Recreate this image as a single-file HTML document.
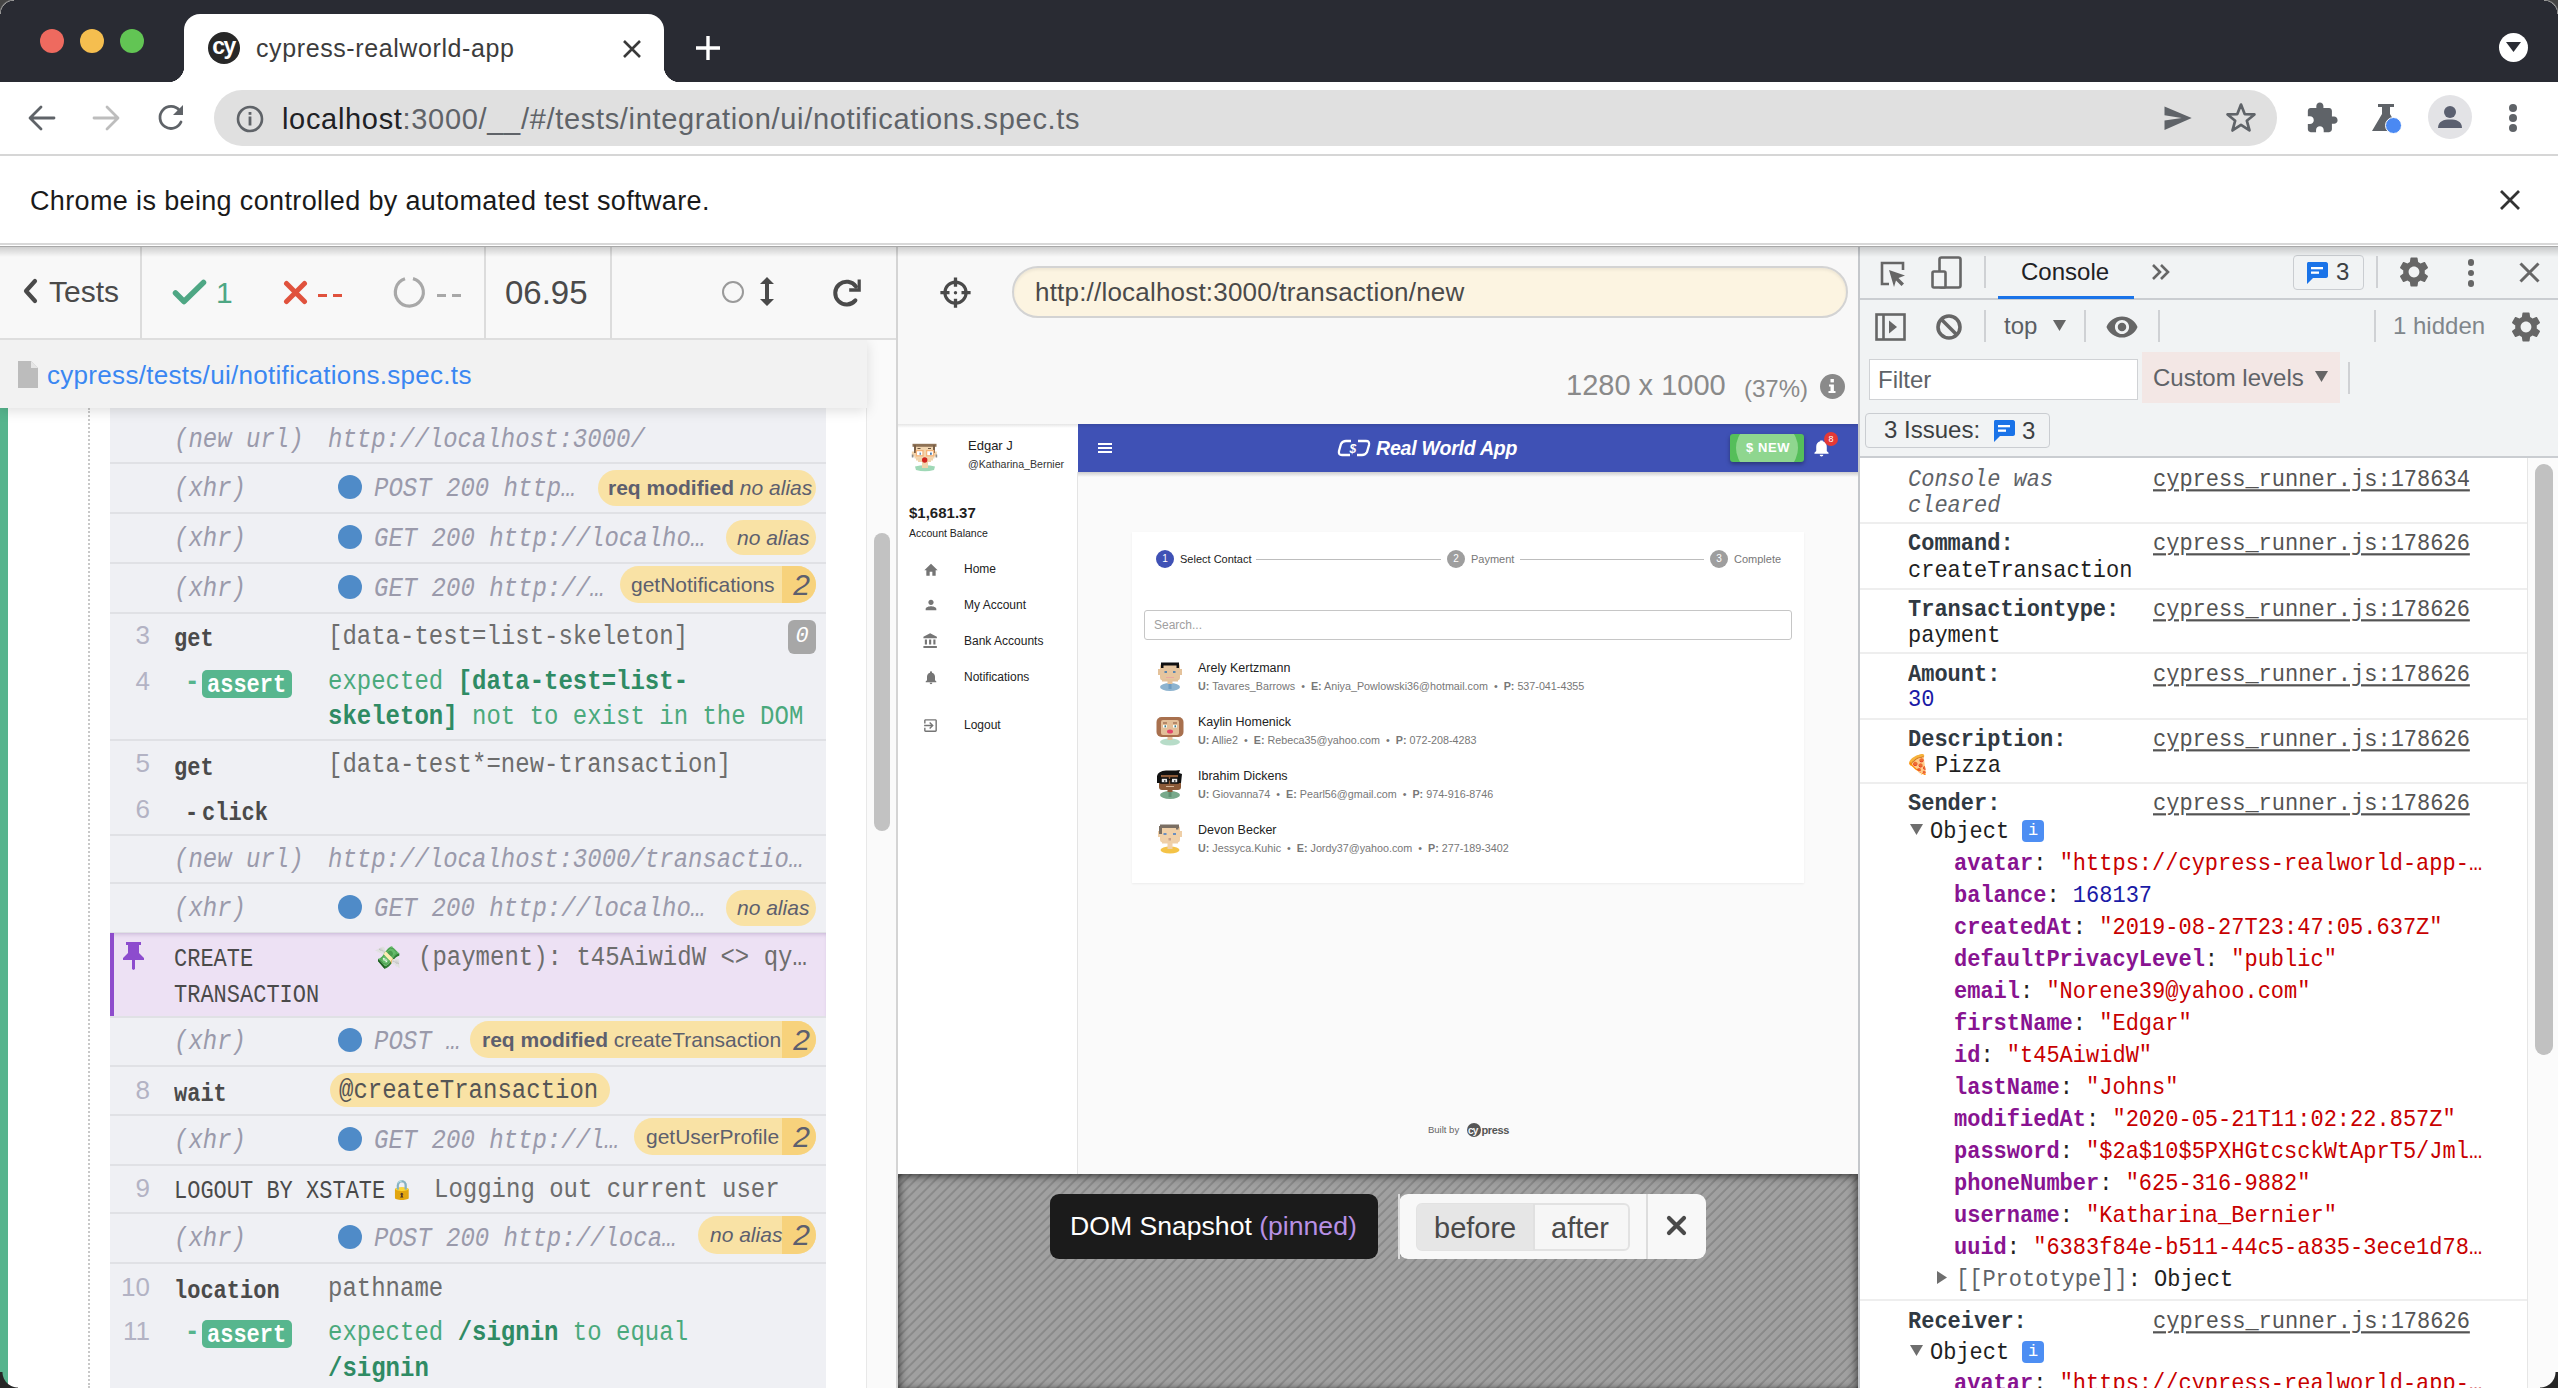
<!DOCTYPE html>
<html><head><meta charset="utf-8">
<style>
*{box-sizing:border-box;margin:0;padding:0}
html,body{width:2558px;height:1388px;overflow:hidden;background:#fff;font-family:"Liberation Sans",sans-serif;position:relative}
.a{position:absolute}
.nw{white-space:nowrap}
#tabstrip{left:0;top:0;width:2558px;height:82px;background:#292b33}
.tl{width:24px;height:24px;border-radius:50%;top:29px}
#tab{left:184px;top:14px;width:480px;height:68px;background:#fff;border-radius:16px 16px 0 0}
#toolbar{left:0;top:82px;width:2558px;height:73px;background:#fff}
#omni{left:214px;top:90px;width:2063px;height:56px;background:#e0e0e0;border-radius:28px}
#infobar{left:0;top:154px;width:2558px;height:92px;background:#fff;border-top:2px solid #d6d6d6;border-bottom:1px solid #fff;box-shadow:inset 0 -2px 0 #d8d8d8}
.badge{position:absolute;border-radius:20px;background:#f9e2a5;overflow:hidden;white-space:nowrap}
</style></head><body>
<!-- TAB STRIP -->
<div id="tabstrip" class="a"></div>
<div class="a tl" style="left:40px;background:#ee6a5f"></div>
<div class="a tl" style="left:80px;background:#f5be4f"></div>
<div class="a tl" style="left:120px;background:#62c554"></div>
<div id="tab" class="a"></div>
<div class="a" style="left:168px;top:66px;width:16px;height:16px;background:radial-gradient(circle at 0 0,#292b33 16px,#fff 16.5px)"></div>
<div class="a" style="left:664px;top:66px;width:16px;height:16px;background:radial-gradient(circle at 100% 0,#292b33 16px,#fff 16.5px)"></div>
<div class="a" style="left:208px;top:32px;width:32px;height:32px;border-radius:50%;background:#282828;color:#fff;font-weight:bold;font-size:23px;line-height:29px;text-align:center;letter-spacing:-1.5px;text-indent:-1px">cy</div>
<div class="a nw" style="left:256px;top:32px;font-size:25px;color:#3c3c3c;line-height:32px;letter-spacing:0.6px">cypress-realworld-app</div>
<svg class="a" style="left:621px;top:38px" width="22" height="22" viewBox="0 0 22 22"><path d="M3 3L19 19M19 3L3 19" stroke="#3a3a3a" stroke-width="2.6"/></svg>
<svg class="a" style="left:694px;top:34px" width="28" height="28" viewBox="0 0 28 28"><path d="M14 2V26M2 14H26" stroke="#fff" stroke-width="3.4"/></svg>
<div class="a" style="left:2499px;top:33px;width:29px;height:29px;border-radius:50%;background:#fff"></div>
<svg class="a" style="left:2505px;top:40px" width="17" height="14" viewBox="0 0 17 14"><path d="M1 2H16L8.5 12Z" fill="#292b33"/></svg>
<!-- TOOLBAR -->
<div id="toolbar" class="a"></div>
<svg class="a" style="left:26px;top:102px" width="32" height="32" viewBox="0 0 32 32"><path d="M28 16H5M15 5L4 16L15 27" stroke="#5f6368" stroke-width="2.8" fill="none" stroke-linecap="round" stroke-linejoin="round"/></svg>
<svg class="a" style="left:90px;top:102px" width="32" height="32" viewBox="0 0 32 32"><path d="M4 16H27M17 5L28 16L17 27" stroke="#bdbdbd" stroke-width="2.8" fill="none" stroke-linecap="round" stroke-linejoin="round"/></svg>
<svg class="a" style="left:155px;top:102px" width="32" height="32" viewBox="0 0 32 32"><path d="M26 20A11 11 0 1 1 24.5 8.5" stroke="#5f6368" stroke-width="2.8" fill="none" stroke-linecap="round"/><path d="M28 3V13H18Z" fill="#5f6368"/></svg>
<div id="omni" class="a"></div>
<svg class="a" style="left:235px;top:104px" width="30" height="30" viewBox="0 0 30 30"><circle cx="15" cy="15" r="12" stroke="#5f6368" stroke-width="2.6" fill="none"/><rect x="13.6" y="12.5" width="2.8" height="9" fill="#5f6368"/><rect x="13.6" y="8" width="2.8" height="2.8" fill="#5f6368"/></svg>
<div class="a nw" style="left:282px;top:101px;font-size:29px;line-height:36px;color:#5f6368;letter-spacing:0.68px"><span style="color:#202124">localhost</span>:3000/__/#/tests/integration/ui/notifications.spec.ts</div>
<svg class="a" style="left:2162px;top:103px" width="34" height="30" viewBox="0 0 34 30"><path d="M2.5 3.4L29.7 15L2.5 26.9V17.6L19.7 15L2.5 12.3Z" fill="#5f6368"/></svg>
<svg class="a" style="left:2224px;top:101px" width="34" height="34" viewBox="0 0 24 24"><path d="M12 2.5L14.6 9.2L21.5 9.5L16.1 13.9L18 20.8L12 16.8L6 20.8L7.9 13.9L2.5 9.5L9.4 9.2Z" fill="none" stroke="#5f6368" stroke-width="1.9" stroke-linejoin="round"/></svg>
<svg class="a" style="left:2304px;top:101px" width="36" height="34" viewBox="0 0 24 24"><path d="M20.5 11H19V7c0-1.1-.9-2-2-2h-4V3.5C13 2.12 11.88 1 10.5 1S8 2.12 8 3.5V5H4c-1.1 0-1.99.9-1.99 2v3.8H3.5c1.49 0 2.7 1.21 2.7 2.7s-1.21 2.7-2.7 2.7H2V20c0 1.1.9 2 2 2h3.8v-1.5c0-1.49 1.21-2.7 2.7-2.7 1.49 0 2.7 1.21 2.7 2.7V22H17c1.1 0 2-.9 2-2v-4h1.5c1.38 0 2.5-1.12 2.5-2.5S21.88 11 20.5 11z" fill="#5f6368"/></svg>
<svg class="a" style="left:2368px;top:102px" width="36" height="32" viewBox="0 0 36 32"><path d="M10 2H26V5H22V12L32 29H4L14 12V5H10Z" fill="#5f6368"/></svg>
<div class="a" style="left:2385.3px;top:117.4px;width:17px;height:17px;border-radius:50%;background:#4a89f3;border:1.7px solid #fff"></div>
<div class="a" style="left:2428px;top:95px;width:44px;height:44px;border-radius:50%;background:#e3e3e6"></div>
<svg class="a" style="left:2436px;top:103px" width="28" height="28" viewBox="0 0 28 28"><circle cx="14" cy="9" r="6" fill="#5b6070"/><path d="M2 25C2 18 8 16.5 14 16.5S26 18 26 25Z" fill="#5b6070"/></svg>
<div class="a" style="left:2509px;top:104px;width:8px;height:8px;border-radius:50%;background:#5f6368"></div>
<div class="a" style="left:2509px;top:114px;width:8px;height:8px;border-radius:50%;background:#5f6368"></div>
<div class="a" style="left:2509px;top:124px;width:8px;height:8px;border-radius:50%;background:#5f6368"></div>
<!-- INFOBAR -->
<div id="infobar" class="a"></div>
<div class="a nw" style="left:30px;top:185px;font-size:27px;line-height:32px;color:#1a1a1a;letter-spacing:0.36px">Chrome is being controlled by automated test software.</div>
<svg class="a" style="left:2499px;top:189px" width="22" height="22" viewBox="0 0 22 22"><path d="M2 2L20 20M20 2L2 20" stroke="#333" stroke-width="2.8"/></svg>
<div class="a" style="left:0px;top:246px;width:897px;height:1142px;background:#fff;"></div>
<div class="a" style="left:0px;top:246px;width:897px;height:93px;background:#f8f8f8;"></div>
<div class="a" style="left:0px;top:338px;width:897px;height:2px;background:#dedede;"></div>
<div class="a" style="left:140px;top:246px;width:2px;height:93px;background:#dcdcdc;"></div>
<div class="a" style="left:484px;top:246px;width:2px;height:93px;background:#dcdcdc;"></div>
<div class="a" style="left:610px;top:246px;width:2px;height:93px;background:#dcdcdc;"></div>
<svg class="a" style="left:22px;top:278px" width="18" height="26" viewBox="0 0 18 26"><path d="M13 3L4 13L13 23" stroke="#4a4a4a" stroke-width="4.2" fill="none" stroke-linecap="round" stroke-linejoin="round"/></svg>
<div class="a nw" style="left:49px;top:276.5px;font-size:30px;line-height:30px;color:#4a4a4a;">Tests</div>
<svg class="a" style="left:172px;top:279px" width="35" height="26" viewBox="0 0 35 26"><path d="M3.5 14L12 22.5L31.5 3.5" stroke="#4ea784" stroke-width="5.5" fill="none" stroke-linecap="round" stroke-linejoin="round"/></svg>
<div class="a nw" style="left:216px;top:277.5px;font-size:30px;line-height:30px;color:#4ea784;">1</div>
<svg class="a" style="left:283px;top:280px" width="25" height="25" viewBox="0 0 25 25"><path d="M3.5 3.5L21.5 21.5M21.5 3.5L3.5 21.5" stroke="#e0523d" stroke-width="5" stroke-linecap="round"/></svg>
<div class="a" style="left:318px;top:294px;width:9px;height:3px;background:#e0523d;"></div>
<div class="a" style="left:333px;top:294px;width:9px;height:3px;background:#e0523d;"></div>
<svg class="a" style="left:392px;top:275px" width="35" height="35" viewBox="0 0 35 35"><path d="M21 3.6A14 14 0 1 1 13 3.8" stroke="#a8a8a8" stroke-width="3.2" fill="none"/></svg>
<div class="a" style="left:437px;top:294px;width:9px;height:3px;background:#a8a8a8;"></div>
<div class="a" style="left:452px;top:294px;width:9px;height:3px;background:#a8a8a8;"></div>
<div class="a nw" style="left:505px;top:275.9px;font-size:33px;line-height:33px;color:#4a4a4a;">06.95</div>
<div class="a" style="left:722px;top:281px;width:22px;height:22px;border-radius:50%;border:2px solid #9a9a9a"></div>
<svg class="a" style="left:758px;top:276px" width="18" height="31" viewBox="0 0 18 31"><path d="M9 1L16 8H11V23H16L9 30L2 23H7V8H2Z" fill="#4a4a4a"/></svg>
<svg class="a" style="left:830px;top:277px" width="34" height="32" viewBox="0 0 34 32"><path d="M26 9.6A11.4 11.4 0 1 0 25.4 23.4" stroke="#4a4a4a" stroke-width="4" fill="none" stroke-linecap="round"/><path d="M19.2 11.2H27.6V2.4H30.8V14.7H19.2Z" fill="#4a4a4a"/></svg>
<div class="a" style="left:0px;top:340px;width:867px;height:68px;background:#f2f2f2;"></div>
<svg class="a" style="left:18px;top:361px" width="20" height="27" viewBox="0 0 20 27"><path d="M0 0H13L20 7V27H0Z" fill="#bcbcbc"/><path d="M13 0V7H20" fill="#e6e6e6"/></svg>
<div class="a nw" style="left:47px;top:361.9px;font-size:26px;line-height:26px;color:#3a87f2;letter-spacing:0.3px;">cypress/tests/ui/notifications.spec.ts</div>
<div class="a" style="left:867px;top:340px;width:29px;height:1048px;background:#fafafa;"></div>
<div class="a" style="left:866px;top:408px;width:1px;height:980px;background:#e8e8e8;"></div>
<div class="a" style="left:874px;top:533px;width:16px;height:298px;background:#c2c2c2;border-radius:8px;"></div>
<div class="a" style="left:0px;top:408px;width:8px;height:980px;background:#56b48d;"></div>
<div class="a" style="left:88px;top:408px;width:0;height:980px;border-left:2px dotted #c8c8c8"></div>
<div class="a" style="left:110px;top:408px;width:716px;height:980px;background:#eff0f4;"></div>
<div class="a" style="left:110px;top:462px;width:716px;height:2px;background:#e0e1e5;"></div>
<div class="a" style="left:110px;top:512px;width:716px;height:2px;background:#e0e1e5;"></div>
<div class="a" style="left:110px;top:562px;width:716px;height:2px;background:#e0e1e5;"></div>
<div class="a" style="left:110px;top:612px;width:716px;height:2px;background:#e0e1e5;"></div>
<div class="a" style="left:110px;top:739px;width:716px;height:2px;background:#e0e1e5;"></div>
<div class="a" style="left:110px;top:834px;width:716px;height:2px;background:#e0e1e5;"></div>
<div class="a" style="left:110px;top:882px;width:716px;height:2px;background:#e0e1e5;"></div>
<div class="a" style="left:110px;top:932px;width:716px;height:2px;background:#e0e1e5;"></div>
<div class="a" style="left:110px;top:1016px;width:716px;height:2px;background:#e0e1e5;"></div>
<div class="a" style="left:110px;top:1065px;width:716px;height:2px;background:#e0e1e5;"></div>
<div class="a" style="left:110px;top:1114px;width:716px;height:2px;background:#e0e1e5;"></div>
<div class="a" style="left:110px;top:1164px;width:716px;height:2px;background:#e0e1e5;"></div>
<div class="a" style="left:110px;top:1212px;width:716px;height:2px;background:#e0e1e5;"></div>
<div class="a" style="left:110px;top:1262px;width:716px;height:2px;background:#e0e1e5;"></div>
<div class="a" style="left:110px;top:933px;width:716px;height:83px;background:#ede1f4;box-shadow:inset 0 3px 4px -2px rgba(80,40,120,.25);"></div>
<div class="a" style="left:110px;top:933px;width:4px;height:83px;background:#8e4ccc;"></div>
<div class="a nw" style="left:174px;top:428.8px;font-size:24px;line-height:24px;color:#9a9aab;font-family:'Liberation Mono',monospace;font-style:italic;transform:scaleY(1.14);transform-origin:0 18.2px;">(new url)</div>
<div class="a nw" style="left:328px;top:428.8px;font-size:24px;line-height:24px;color:#9a9aab;font-family:'Liberation Mono',monospace;font-style:italic;transform:scaleY(1.14);transform-origin:0 18.2px;">http://localhost:3000/</div>
<div class="a nw" style="left:174px;top:477.8px;font-size:24px;line-height:24px;color:#9a9aab;font-family:'Liberation Mono',monospace;font-style:italic;transform:scaleY(1.14);transform-origin:0 18.2px;">(xhr)</div>
<div class="a" style="left:338px;top:475px;width:24px;height:24px;border-radius:50%;background:#4f8bc8"></div>
<div class="a nw" style="left:374px;top:477.8px;font-size:24px;line-height:24px;color:#9a9aab;font-family:'Liberation Mono',monospace;font-style:italic;transform:scaleY(1.14);transform-origin:0 18.2px;">POST 200 http…</div>
<div class="badge" style="left:598px;top:470px;width:218px;height:36px;"><div class="a nw" style="left:10px;top:0;height:36px;line-height:36px;font-size:21px;color:#5d5f6e"><span style="font-weight:bold">req modified </span><span style="font-style:italic">no alias</span></div></div>
<div class="a nw" style="left:174px;top:527.8px;font-size:24px;line-height:24px;color:#9a9aab;font-family:'Liberation Mono',monospace;font-style:italic;transform:scaleY(1.14);transform-origin:0 18.2px;">(xhr)</div>
<div class="a" style="left:338px;top:525px;width:24px;height:24px;border-radius:50%;background:#4f8bc8"></div>
<div class="a nw" style="left:374px;top:527.8px;font-size:24px;line-height:24px;color:#9a9aab;font-family:'Liberation Mono',monospace;font-style:italic;transform:scaleY(1.14);transform-origin:0 18.2px;">GET 200 http://localho…</div>
<div class="badge" style="left:726px;top:520px;width:90px;height:35px;"><div class="a nw" style="left:11px;top:0;height:35px;line-height:35px;font-size:21px;color:#5d5f6e"><span style="font-style:italic">no alias</span></div></div>
<div class="a nw" style="left:174px;top:577.8px;font-size:24px;line-height:24px;color:#9a9aab;font-family:'Liberation Mono',monospace;font-style:italic;transform:scaleY(1.14);transform-origin:0 18.2px;">(xhr)</div>
<div class="a" style="left:338px;top:575px;width:24px;height:24px;border-radius:50%;background:#4f8bc8"></div>
<div class="a nw" style="left:374px;top:577.8px;font-size:24px;line-height:24px;color:#9a9aab;font-family:'Liberation Mono',monospace;font-style:italic;transform:scaleY(1.14);transform-origin:0 18.2px;">GET 200 http://…</div>
<div class="badge" style="left:620px;top:566px;width:196px;height:37px;"><div class="a" style="right:0;top:0;width:34px;height:37px;background:#f7d27c"></div><div class="a nw" style="right:6px;top:3.5px;font-size:30px;line-height:30px;font-style:italic;color:#5d5f6e">2</div><div class="a nw" style="left:11px;top:0;height:37px;line-height:37px;font-size:21px;color:#5d5f6e"><span style="">getNotifications</span></div></div>
<div class="a nw" style="left:100px;top:621.9px;font-size:26px;line-height:26px;color:#b3b3c4;width:50px;text-align:right;">3</div>
<div class="a nw" style="left:174px;top:630.3px;font-size:22px;line-height:22px;color:#4a4a4a;font-family:'Liberation Mono',monospace;font-weight:bold;transform:scaleY(1.14);transform-origin:0 16.7px;">get</div>
<div class="a nw" style="left:328px;top:625.8px;font-size:24px;line-height:24px;color:#6d6d6d;font-family:'Liberation Mono',monospace;transform:scaleY(1.14);transform-origin:0 18.2px;">[data-test=list-skeleton]</div>
<div class="a" style="left:788px;top:620px;width:28px;height:34px;border-radius:6px;background:#a7a7a7;color:#fff;font-family:'Liberation Mono';font-style:italic;font-size:22px;line-height:34px;text-align:center">0</div>
<div class="a nw" style="left:100px;top:667.9px;font-size:26px;line-height:26px;color:#b3b3c4;width:50px;text-align:right;">4</div>
<div class="a nw" style="left:185px;top:671.8px;font-size:24px;line-height:24px;color:#56b48d;font-family:'Liberation Mono',monospace;font-weight:bold;transform:scaleY(1.14);transform-origin:0 18.2px;">-</div>
<div class="a" style="left:202px;top:670px;width:90px;height:28px;border-radius:5px;background:#57b68e"></div>
<div class="a nw" style="left:207px;top:675.8px;font-size:22px;line-height:22px;color:#fff;font-family:'Liberation Mono',monospace;font-weight:bold;transform:scaleY(1.14);transform-origin:0 16.7px;">assert</div>
<div class="a nw" style="left:328px;top:670.8px;font-size:24px;line-height:24px;color:#4aa97c;font-family:'Liberation Mono',monospace;transform:scaleY(1.14);transform-origin:0 18.2px;">expected <b style="color:#2f8b64">[data-test=list-</b></div>
<div class="a nw" style="left:328px;top:705.8px;font-size:24px;line-height:24px;color:#4aa97c;font-family:'Liberation Mono',monospace;transform:scaleY(1.14);transform-origin:0 18.2px;"><b style="color:#2f8b64">skeleton]</b> not to exist in the DOM</div>
<div class="a nw" style="left:100px;top:749.9px;font-size:26px;line-height:26px;color:#b3b3c4;width:50px;text-align:right;">5</div>
<div class="a nw" style="left:174px;top:758.8px;font-size:22px;line-height:22px;color:#4a4a4a;font-family:'Liberation Mono',monospace;font-weight:bold;transform:scaleY(1.14);transform-origin:0 16.7px;">get</div>
<div class="a nw" style="left:328px;top:753.8px;font-size:24px;line-height:24px;color:#6d6d6d;font-family:'Liberation Mono',monospace;transform:scaleY(1.14);transform-origin:0 18.2px;">[data-test*=new-transaction]</div>
<div class="a nw" style="left:100px;top:795.9px;font-size:26px;line-height:26px;color:#b3b3c4;width:50px;text-align:right;">6</div>
<div class="a nw" style="left:185px;top:804.3px;font-size:22px;line-height:22px;color:#4a4a4a;font-family:'Liberation Mono',monospace;font-weight:bold;transform:scaleY(1.14);transform-origin:0 16.7px;">-</div>
<div class="a nw" style="left:202px;top:804.3px;font-size:22px;line-height:22px;color:#4a4a4a;font-family:'Liberation Mono',monospace;font-weight:bold;transform:scaleY(1.14);transform-origin:0 16.7px;">click</div>
<div class="a nw" style="left:174px;top:848.8px;font-size:24px;line-height:24px;color:#9a9aab;font-family:'Liberation Mono',monospace;font-style:italic;transform:scaleY(1.14);transform-origin:0 18.2px;">(new url)</div>
<div class="a nw" style="left:328px;top:848.8px;font-size:24px;line-height:24px;color:#9a9aab;font-family:'Liberation Mono',monospace;font-style:italic;transform:scaleY(1.14);transform-origin:0 18.2px;">http://localhost:3000/transactio…</div>
<div class="a nw" style="left:174px;top:897.8px;font-size:24px;line-height:24px;color:#9a9aab;font-family:'Liberation Mono',monospace;font-style:italic;transform:scaleY(1.14);transform-origin:0 18.2px;">(xhr)</div>
<div class="a" style="left:338px;top:895px;width:24px;height:24px;border-radius:50%;background:#4f8bc8"></div>
<div class="a nw" style="left:374px;top:897.8px;font-size:24px;line-height:24px;color:#9a9aab;font-family:'Liberation Mono',monospace;font-style:italic;transform:scaleY(1.14);transform-origin:0 18.2px;">GET 200 http://localho…</div>
<div class="badge" style="left:726px;top:890px;width:90px;height:36px;"><div class="a nw" style="left:11px;top:0;height:36px;line-height:36px;font-size:21px;color:#5d5f6e"><span style="font-style:italic">no alias</span></div></div>
<svg class="a" style="left:122px;top:941px" width="23" height="29" viewBox="0 0 23 29"><path d="M4 1H19V4H17L17 12L22 17V19H13V28L11.5 29L10 28V19H1V17L6 12V4H4Z" fill="#8d4cce"/></svg>
<div class="a nw" style="left:174px;top:950.3px;font-size:22px;line-height:22px;color:#4a4a4a;font-family:'Liberation Mono',monospace;transform:scaleY(1.14);transform-origin:0 16.7px;">CREATE</div>
<div class="a nw" style="left:174px;top:986.3px;font-size:22px;line-height:22px;color:#4a4a4a;font-family:'Liberation Mono',monospace;transform:scaleY(1.14);transform-origin:0 16.7px;">TRANSACTION</div>
<div class="a nw" style="left:374px;top:947.3px;font-size:22px;line-height:22px;color:#000;">💸</div>
<div class="a nw" style="left:418px;top:946.8px;font-size:24px;line-height:24px;color:#6d6d6d;font-family:'Liberation Mono',monospace;transform:scaleY(1.14);transform-origin:0 18.2px;">(payment): t45AiwidW &lt;&gt; qy…</div>
<div class="a nw" style="left:174px;top:1030.8px;font-size:24px;line-height:24px;color:#9a9aab;font-family:'Liberation Mono',monospace;font-style:italic;transform:scaleY(1.14);transform-origin:0 18.2px;">(xhr)</div>
<div class="a" style="left:338px;top:1028px;width:24px;height:24px;border-radius:50%;background:#4f8bc8"></div>
<div class="a nw" style="left:374px;top:1030.8px;font-size:24px;line-height:24px;color:#9a9aab;font-family:'Liberation Mono',monospace;font-style:italic;transform:scaleY(1.14);transform-origin:0 18.2px;">POST …</div>
<div class="badge" style="left:470px;top:1021px;width:346px;height:37px;"><div class="a" style="right:0;top:0;width:34px;height:37px;background:#f7d27c"></div><div class="a nw" style="right:6px;top:3.5px;font-size:30px;line-height:30px;font-style:italic;color:#5d5f6e">2</div><div class="a nw" style="left:12px;top:0;height:37px;line-height:37px;font-size:21px;color:#5d5f6e"><span style="font-weight:bold">req modified </span><span style="">createTransaction</span></div></div>
<div class="a nw" style="left:100px;top:1076.9px;font-size:26px;line-height:26px;color:#b3b3c4;width:50px;text-align:right;">8</div>
<div class="a nw" style="left:174px;top:1085.3px;font-size:22px;line-height:22px;color:#4a4a4a;font-family:'Liberation Mono',monospace;font-weight:bold;transform:scaleY(1.14);transform-origin:0 16.7px;">wait</div>
<div class="badge" style="left:330px;top:1073px;width:280px;height:34px"></div>
<div class="a nw" style="left:339px;top:1079.8px;font-size:24px;line-height:24px;color:#555;font-family:'Liberation Mono',monospace;transform:scaleY(1.14);transform-origin:0 18.2px;">@createTransaction</div>
<div class="a nw" style="left:174px;top:1129.8px;font-size:24px;line-height:24px;color:#9a9aab;font-family:'Liberation Mono',monospace;font-style:italic;transform:scaleY(1.14);transform-origin:0 18.2px;">(xhr)</div>
<div class="a" style="left:338px;top:1127px;width:24px;height:24px;border-radius:50%;background:#4f8bc8"></div>
<div class="a nw" style="left:374px;top:1129.8px;font-size:24px;line-height:24px;color:#9a9aab;font-family:'Liberation Mono',monospace;font-style:italic;transform:scaleY(1.14);transform-origin:0 18.2px;">GET 200 http://l…</div>
<div class="badge" style="left:634px;top:1118px;width:182px;height:37px;"><div class="a" style="right:0;top:0;width:34px;height:37px;background:#f7d27c"></div><div class="a nw" style="right:6px;top:3.5px;font-size:30px;line-height:30px;font-style:italic;color:#5d5f6e">2</div><div class="a nw" style="left:12px;top:0;height:37px;line-height:37px;font-size:21px;color:#5d5f6e"><span style="">getUserProfile</span></div></div>
<div class="a nw" style="left:100px;top:1174.9px;font-size:26px;line-height:26px;color:#b3b3c4;width:50px;text-align:right;">9</div>
<div class="a nw" style="left:174px;top:1182.3px;font-size:22px;line-height:22px;color:#4a4a4a;font-family:'Liberation Mono',monospace;transform:scaleY(1.14);transform-origin:0 16.7px;">LOGOUT BY XSTATE</div>
<div class="a nw" style="left:390px;top:1179.8px;font-size:19px;line-height:19px;color:#000;">🔒</div>
<div class="a nw" style="left:434px;top:1178.8px;font-size:24px;line-height:24px;color:#6d6d6d;font-family:'Liberation Mono',monospace;transform:scaleY(1.14);transform-origin:0 18.2px;">Logging out current user</div>
<div class="a nw" style="left:174px;top:1227.8px;font-size:24px;line-height:24px;color:#9a9aab;font-family:'Liberation Mono',monospace;font-style:italic;transform:scaleY(1.14);transform-origin:0 18.2px;">(xhr)</div>
<div class="a" style="left:338px;top:1225px;width:24px;height:24px;border-radius:50%;background:#4f8bc8"></div>
<div class="a nw" style="left:374px;top:1227.8px;font-size:24px;line-height:24px;color:#9a9aab;font-family:'Liberation Mono',monospace;font-style:italic;transform:scaleY(1.14);transform-origin:0 18.2px;">POST 200 http://loca…</div>
<div class="badge" style="left:698px;top:1216px;width:118px;height:38px;"><div class="a" style="right:0;top:0;width:34px;height:38px;background:#f7d27c"></div><div class="a nw" style="right:6px;top:4.0px;font-size:30px;line-height:30px;font-style:italic;color:#5d5f6e">2</div><div class="a nw" style="left:12px;top:0;height:38px;line-height:38px;font-size:21px;color:#5d5f6e"><span style="font-style:italic">no alias</span></div></div>
<div class="a nw" style="left:100px;top:1273.9px;font-size:26px;line-height:26px;color:#b3b3c4;width:50px;text-align:right;">10</div>
<div class="a nw" style="left:174px;top:1282.3px;font-size:22px;line-height:22px;color:#4a4a4a;font-family:'Liberation Mono',monospace;font-weight:bold;transform:scaleY(1.14);transform-origin:0 16.7px;">location</div>
<div class="a nw" style="left:328px;top:1277.8px;font-size:24px;line-height:24px;color:#6d6d6d;font-family:'Liberation Mono',monospace;transform:scaleY(1.14);transform-origin:0 18.2px;">pathname</div>
<div class="a nw" style="left:100px;top:1317.9px;font-size:26px;line-height:26px;color:#b3b3c4;width:50px;text-align:right;">11</div>
<div class="a nw" style="left:185px;top:1321.8px;font-size:24px;line-height:24px;color:#56b48d;font-family:'Liberation Mono',monospace;font-weight:bold;transform:scaleY(1.14);transform-origin:0 18.2px;">-</div>
<div class="a" style="left:202px;top:1320px;width:90px;height:28px;border-radius:5px;background:#57b68e"></div>
<div class="a nw" style="left:207px;top:1326.3px;font-size:22px;line-height:22px;color:#fff;font-family:'Liberation Mono',monospace;font-weight:bold;transform:scaleY(1.14);transform-origin:0 16.7px;">assert</div>
<div class="a nw" style="left:328px;top:1321.8px;font-size:24px;line-height:24px;color:#4aa97c;font-family:'Liberation Mono',monospace;transform:scaleY(1.14);transform-origin:0 18.2px;">expected <b style="color:#2f8b64">/signin</b> to equal</div>
<div class="a nw" style="left:328px;top:1357.8px;font-size:24px;line-height:24px;color:#4aa97c;font-family:'Liberation Mono',monospace;transform:scaleY(1.14);transform-origin:0 18.2px;"><b style="color:#2f8b64">/signin</b></div>
<div class="a" style="left:0;top:340px;width:867px;height:68px;box-shadow:0 3px 12px rgba(0,0,0,.13);clip-path:inset(0 -20px -20px -20px)"></div>
<div class="a" style="left:897px;top:246px;width:962px;height:1142px;background:#f8f8f8;"></div>
<div class="a" style="left:896px;top:246px;width:2px;height:1142px;background:#d4d4d4;"></div>
<svg class="a" style="left:940px;top:277px" width="32" height="32" viewBox="0 0 32 32"><circle cx="15.5" cy="15.7" r="10.6" stroke="#4a4a4a" stroke-width="3.1" fill="none"/><path d="M15.5 0.6V9.7M15.5 21.7V30.8M0.4 15.7H9.5M21.5 15.7H30.6" stroke="#4a4a4a" stroke-width="3.3"/><circle cx="15.5" cy="15.7" r="1.7" fill="#4a4a4a"/></svg>
<div class="a" style="left:1012px;top:266px;width:836px;height:52px;border-radius:26px;background:#fcf4e1;border:2.5px solid #d3d3d3;box-shadow:inset 0 2px 3px rgba(0,0,0,.06)"></div>
<div class="a nw" style="left:1035px;top:278.9px;font-size:26px;line-height:26px;color:#4a4a4a;letter-spacing:0.2px;">http://localhost:3000/transaction/new</div>
<div class="a nw" style="left:1566px;top:371.4px;font-size:29px;line-height:29px;color:#8a8a8a;">1280 x 1000</div>
<div class="a nw" style="left:1744px;top:376.6px;font-size:24px;line-height:24px;color:#8a8a8a;">(37%)</div>
<div class="a" style="left:1820px;top:374px;width:25px;height:25px;border-radius:50%;background:#8a8a8a"></div>
<svg class="a" style="left:1826px;top:377px" width="12" height="18" viewBox="0 0 12 18"><rect x="4.5" y="2" width="3.4" height="3.4" fill="#fff"/><path d="M3 7.5H7.9V14H9.5V16H2.5V14H4.5V9.5H3Z" fill="#fff"/></svg>
<div class="a" style="left:898px;top:424px;width:960px;height:750px;background:#fafafa;"></div>
<div class="a" style="left:898px;top:424px;width:180px;height:750px;background:#fff;"></div>
<div class="a" style="left:1077px;top:472px;width:1px;height:702px;background:#e4e4e4;"></div>
<div class="a" style="left:1078px;top:424px;width:780px;height:48px;background:#3f51b5;"></div>
<div class="a" style="left:1078px;top:472px;width:780px;height:5px;background:linear-gradient(rgba(0,0,0,.18),rgba(0,0,0,0));"></div>
<div class="a" style="left:898px;top:424px;width:960px;height:4px;background:linear-gradient(rgba(0,0,0,.10),rgba(0,0,0,0));"></div>
<div class="a" style="left:1098px;top:443px;width:14px;height:2px;background:#fff;"></div>
<div class="a" style="left:1098px;top:447px;width:14px;height:2px;background:#fff;"></div>
<div class="a" style="left:1098px;top:451px;width:14px;height:2px;background:#fff;"></div>
<svg class="a" style="left:1337px;top:438px" width="35" height="20" viewBox="0 0 35 20"><path d="M14 3H9C6 3 5 4 4 6L2 13C1.5 16 2.5 17 5 17H13" stroke="#fff" stroke-width="2.3" fill="none"/><path d="M20 17H25C28 17 29 16 30 14L32 7C32.5 4 31.5 3 29 3H21" stroke="#fff" stroke-width="2.3" fill="none"/><text x="12.5" y="15" font-size="12" font-weight="bold" font-style="italic" fill="#fff" font-family="Liberation Sans">$</text></svg>
<div class="a nw" style="left:1376px;top:438.9px;font-size:19.5px;line-height:19.5px;color:#fff;font-weight:bold;font-style:italic;letter-spacing:-0.2px;">Real World App</div>
<div class="a" style="left:1730px;top:434px;width:74px;height:28px;border-radius:3px;background:#55be5a;box-shadow:0 2px 4px rgba(0,0,0,.35);overflow:hidden"><div class="a" style="left:6px;top:-14px;width:62px;height:56px;border-radius:50%;background:#8fd68f"></div></div>
<div class="a nw" style="left:1746px;top:441.4px;font-size:13px;line-height:13px;color:#fff;font-weight:bold;letter-spacing:0.6px;">$ NEW</div>
<svg class="a" style="left:1814px;top:440px" width="15" height="17" viewBox="0 0 24 28"><path d="M12 27c1.6 0 2.9-1.3 2.9-2.9H9.1c0 1.6 1.3 2.9 2.9 2.9zm8.7-8.7v-7.2c0-4.4-2.4-8.2-6.5-9.1V1H9.8v1C5.7 2.9 3.3 6.6 3.3 11.1v7.2L0.4 21.2v1.4h23.2v-1.4z" fill="#fff"/></svg>
<div class="a" style="left:1824px;top:432px;width:14px;height:14px;border-radius:50%;background:#e53935;color:#fff;font-size:9px;line-height:14px;text-align:center">8</div>
<svg class="a" style="left:911px;top:443px" width="28" height="29" viewBox="0 0 28 29"><path d="M4 23.5Q14 21 24 23.5L23 27Q14 29.5 5 27Z" fill="#9fd8b6"/><rect x="11" y="18" width="6" height="7" fill="#f0d2aa"/><rect x="0.8" y="8.5" width="25" height="5" fill="#f0d4ae"/><rect x="0.8" y="11.5" width="1.6" height="3" fill="#8d8d8d"/><rect x="24.6" y="11.5" width="1.6" height="3" fill="#8d8d8d"/><rect x="3.5" y="2.5" width="20" height="13" fill="#f2d6b0"/><rect x="5" y="15" width="17" height="2.5" fill="#f0d3ac"/><rect x="7" y="17" width="13" height="2" fill="#f0d3ac"/><rect x="1.5" y="0.8" width="24" height="3" fill="#8e7256"/><rect x="3" y="2" width="2" height="8" fill="#7a6048"/><rect x="22" y="2" width="2" height="8" fill="#7a6048"/><rect x="6.5" y="5" width="3" height="1" fill="#6b5540"/><rect x="17" y="5" width="3" height="1" fill="#6b5540"/><rect x="5.4" y="7.6" width="6.6" height="5.2" fill="#fff" stroke="#f5b47a" stroke-width="1.3"/><rect x="15.6" y="7.6" width="7" height="5.2" fill="#fff" stroke="#f5b47a" stroke-width="1.3"/><rect x="8.6" y="9.6" width="1.2" height="2.2" fill="#4d7aa8"/><rect x="19" y="9.6" width="1.8" height="2.2" fill="#4d7aa8"/><circle cx="13.7" cy="17" r="2.7" fill="#d0231d"/></svg>
<div class="a nw" style="left:968px;top:438.9px;font-size:13px;line-height:13px;color:#222;">Edgar J</div>
<div class="a nw" style="left:968px;top:459.0px;font-size:10.6px;line-height:10.6px;color:#333;">@Katharina_Bernier</div>
<div class="a nw" style="left:909px;top:505.2px;font-size:15px;line-height:15px;color:#1f1f1f;font-weight:bold;">$1,681.37</div>
<div class="a nw" style="left:909px;top:528.1px;font-size:10.5px;line-height:10.5px;color:#222;">Account Balance</div>
<svg class="a" style="left:923px;top:562px" width="16" height="14" viewBox="0 0 24 20"><path d="M10 20v-6h4v6h5v-8h3L12 2 2 12h3v8z" fill="#757575"/></svg>
<svg class="a" style="left:923px;top:597px" width="16" height="16" viewBox="0 0 24 24"><path d="M12 12c2.2 0 4-1.8 4-4s-1.8-4-4-4-4 1.8-4 4 1.8 4 4 4zm0 2c-2.7 0-8 1.3-8 4v2h16v-2c0-2.7-5.3-4-8-4z" fill="#757575"/></svg>
<svg class="a" style="left:922px;top:632px" width="17" height="18" viewBox="0 0 24 24"><path d="M4 10v7h3v-7H4zm6 0v7h3v-7h-3zM2 22h19v-3H2v3zm14-12v7h3v-7h-3zm-4.5-9L2 6v2h19V6l-9.5-5z" fill="#757575"/></svg>
<svg class="a" style="left:923px;top:669px" width="16" height="17" viewBox="0 0 24 24"><path d="M12 22c1.1 0 2-.9 2-2h-4c0 1.1.9 2 2 2zm6-6v-5c0-3.1-1.6-5.6-4.5-6.3V4c0-.8-.7-1.5-1.5-1.5s-1.5.7-1.5 1.5v.7C7.6 5.4 6 7.9 6 11v5l-2 2v1h16v-1l-2-2z" fill="#757575"/></svg>
<svg class="a" style="left:922px;top:717px" width="17" height="17" viewBox="0 0 24 24"><path d="M10.1 15.6L11.5 17l5-5-5-5-1.4 1.4 2.6 2.6H3v2h9.7l-2.6 2.6zM19 3H5c-1.1 0-2 .9-2 2v4h2V5h14v14H5v-4H3v4c0 1.1.9 2 2 2h14c1.1 0 2-.9 2-2V5c0-1.1-.9-2-2-2z" fill="#757575"/></svg>
<div class="a nw" style="left:964px;top:562.8px;font-size:12px;line-height:12px;color:#222;">Home</div>
<div class="a nw" style="left:964px;top:598.8px;font-size:12px;line-height:12px;color:#222;">My Account</div>
<div class="a nw" style="left:964px;top:634.8px;font-size:12px;line-height:12px;color:#222;">Bank Accounts</div>
<div class="a nw" style="left:964px;top:670.8px;font-size:12px;line-height:12px;color:#222;">Notifications</div>
<div class="a nw" style="left:964px;top:718.8px;font-size:12px;line-height:12px;color:#222;">Logout</div>
<div class="a" style="left:1132px;top:532px;width:672px;height:351px;background:#fff;box-shadow:0 1px 2px rgba(0,0,0,.06)"></div>
<div class="a" style="left:1156px;top:550px;width:18px;height:18px;border-radius:50%;background:#3f51b5;color:#fff;font-size:10px;line-height:18px;text-align:center">1</div>
<div class="a" style="left:1447px;top:550px;width:18px;height:18px;border-radius:50%;background:#9e9e9e;color:#fff;font-size:10px;line-height:18px;text-align:center">2</div>
<div class="a" style="left:1710px;top:550px;width:18px;height:18px;border-radius:50%;background:#9e9e9e;color:#fff;font-size:10px;line-height:18px;text-align:center">3</div>
<div class="a nw" style="left:1180px;top:553.6px;font-size:11px;line-height:11px;color:#222;">Select Contact</div>
<div class="a nw" style="left:1471px;top:553.6px;font-size:11px;line-height:11px;color:#777;">Payment</div>
<div class="a nw" style="left:1734px;top:553.6px;font-size:11px;line-height:11px;color:#777;">Complete</div>
<div class="a" style="left:1256px;top:559px;width:185px;height:1px;background:#bdbdbd;"></div>
<div class="a" style="left:1520px;top:559px;width:184px;height:1px;background:#bdbdbd;"></div>
<div class="a" style="left:1144px;top:610px;width:648px;height:30px;border:1px solid #c6c6c6;border-radius:3px;background:#fff"></div>
<div class="a nw" style="left:1154px;top:618.8px;font-size:12px;line-height:12px;color:#a0a0a0;">Search...</div>
<svg class="a" style="left:1156px;top:662px" width="28" height="30" viewBox="0 0 28 30"><ellipse cx="14" cy="25" rx="10" ry="4" fill="#8db3cf"/><rect x="11.5" y="18" width="5" height="4" fill="#e4c29b"/><rect x="12.5" y="22" width="3" height="5" fill="#6f9cc0"/><rect x="2" y="7" width="24" height="6" fill="#e4c29b"/><rect x="4" y="1.5" width="20" height="17" rx="3" fill="#e6c59e"/><rect x="6" y="17" width="16" height="2.5" fill="#e4c29b"/><rect x="5" y="0.5" width="18" height="3" fill="#111"/><rect x="5" y="2" width="2.5" height="4" fill="#111"/><rect x="20.5" y="2" width="2.5" height="4" fill="#111"/><rect x="8.5" y="9" width="2.5" height="2" fill="#5a86b0"/><rect x="17" y="9" width="2.5" height="2" fill="#5a86b0"/><rect x="10" y="15" width="8" height="1" fill="#e9a9a0"/></svg>
<div class="a nw" style="left:1198px;top:662.1px;font-size:12.5px;line-height:12.5px;color:#222;">Arely Kertzmann</div>
<div class="a nw" style="left:1198px;top:680.9px;font-size:10.75px;line-height:10.75px;color:#777;"><b>U:</b> Tavares_Barrows &nbsp;•&nbsp; <b>E:</b> Aniya_Powlowski36@hotmail.com &nbsp;•&nbsp; <b>P:</b> 537-041-4355</div>
<svg class="a" style="left:1156px;top:716px" width="28" height="30" viewBox="0 0 28 30"><ellipse cx="14" cy="26" rx="10" ry="3.5" fill="#b7dcc8"/><rect x="11.5" y="19" width="5" height="5" fill="#e3bf98"/><rect x="0.5" y="1" width="27" height="20" rx="5" fill="#a8704e"/><rect x="5" y="4" width="18" height="15" rx="2" fill="#e3bf98"/><rect x="7" y="9" width="4" height="2.6" fill="#fff"/><rect x="17" y="9" width="4" height="2.6" fill="#fff"/><rect x="8.5" y="9.3" width="1.6" height="2" fill="#3f7e85"/><rect x="18.5" y="9.3" width="1.6" height="2" fill="#3f7e85"/><rect x="7" y="6.5" width="4" height="1" fill="#8a5538"/><rect x="17" y="6.5" width="4" height="1" fill="#8a5538"/><ellipse cx="14" cy="15.5" rx="3" ry="2" fill="#e2456b"/></svg>
<div class="a nw" style="left:1198px;top:716.1px;font-size:12.5px;line-height:12.5px;color:#222;">Kaylin Homenick</div>
<div class="a nw" style="left:1198px;top:734.9px;font-size:10.75px;line-height:10.75px;color:#777;"><b>U:</b> Allie2 &nbsp;•&nbsp; <b>E:</b> Rebeca35@yahoo.com &nbsp;•&nbsp; <b>P:</b> 072-208-4283</div>
<svg class="a" style="left:1156px;top:770px" width="28" height="30" viewBox="0 0 28 30"><ellipse cx="14" cy="25" rx="10" ry="4" fill="#78a98b"/><rect x="11.5" y="18" width="5" height="4" fill="#8b5a38"/><rect x="12.5" y="22" width="3" height="5" fill="#5e8f72"/><rect x="3" y="5" width="22" height="15" rx="3" fill="#8b5a38"/><path d="M1 13V6Q2 1 10 0.5H20L24 0L23 3L26 4L25 13H22V5H5V13Z" fill="#111"/><rect x="5" y="8" width="7" height="5" fill="#e8e8e8" stroke="#111" stroke-width="1.6"/><rect x="15" y="8" width="7" height="5" fill="#e8e8e8" stroke="#111" stroke-width="1.6"/><rect x="11" y="9" width="5" height="1.4" fill="#111"/><rect x="8" y="10" width="1.5" height="2" fill="#555"/><rect x="18" y="10" width="1.5" height="2" fill="#555"/><rect x="10" y="16" width="8" height="1" fill="#d9b89a"/></svg>
<div class="a nw" style="left:1198px;top:770.1px;font-size:12.5px;line-height:12.5px;color:#222;">Ibrahim Dickens</div>
<div class="a nw" style="left:1198px;top:788.9px;font-size:10.75px;line-height:10.75px;color:#777;"><b>U:</b> Giovanna74 &nbsp;•&nbsp; <b>E:</b> Pearl56@gmail.com &nbsp;•&nbsp; <b>P:</b> 974-916-8746</div>
<svg class="a" style="left:1156px;top:824px" width="28" height="30" viewBox="0 0 28 30"><ellipse cx="14" cy="26" rx="9.5" ry="3.5" fill="#f4c347"/><rect x="11.5" y="19" width="5" height="6" fill="#f0d0a8"/><rect x="2" y="7" width="24" height="6" fill="#efcfa7"/><rect x="4" y="1.5" width="20" height="17" rx="3" fill="#f0d0a8"/><rect x="6" y="17" width="16" height="2.5" fill="#efcfa7"/><rect x="4" y="0.5" width="19" height="3.5" fill="#7b6f63"/><rect x="3" y="2" width="3" height="8" fill="#7b6f63"/><rect x="20" y="3" width="2.5" height="2.5" fill="#7b6f63"/><rect x="7.5" y="9" width="3" height="2" fill="#6b8fbf"/><rect x="17" y="9" width="3" height="2" fill="#6b8fbf"/><rect x="12.5" y="14" width="2.5" height="2.5" fill="#c99f8a"/></svg>
<div class="a nw" style="left:1198px;top:824.1px;font-size:12.5px;line-height:12.5px;color:#222;">Devon Becker</div>
<div class="a nw" style="left:1198px;top:842.9px;font-size:10.75px;line-height:10.75px;color:#777;"><b>U:</b> Jessyca.Kuhic &nbsp;•&nbsp; <b>E:</b> Jordy37@yahoo.com &nbsp;•&nbsp; <b>P:</b> 277-189-3402</div>
<div class="a nw" style="left:1428px;top:1125.4px;font-size:9.5px;line-height:9.5px;color:#666;">Built by</div>
<div class="a" style="left:1466.8px;top:1123.4px;width:14px;height:14px;border-radius:50%;background:#555"></div>
<div class="a nw" style="left:1468px;top:1125.5px;font-size:10px;line-height:10px;color:#f4f4f4;font-weight:bold;letter-spacing:-0.8px;">cy</div>
<div class="a nw" style="left:1481.5px;top:1124.7px;font-size:11px;line-height:11px;color:#555;font-weight:bold;letter-spacing:-0.4px;">press</div>
<div class="a" style="left:898px;top:1174px;width:960px;height:214px;background:repeating-linear-gradient(-45deg,#8a8a8a 0px,#8a8a8a 1.2px,#a0a0a0 2px,#a0a0a0 6.3px,#8a8a8a 7.07px)"></div>
<div class="a" style="left:898px;top:1174px;width:960px;height:214px;box-shadow:inset 0 3px 8px rgba(0,0,0,.45),inset 5px 0 8px -3px rgba(0,0,0,.3),inset -5px 0 8px -3px rgba(0,0,0,.3)"></div>
<div class="a" style="left:1050px;top:1194px;width:328px;height:65px;border-radius:9px;background:#1b1b1b"></div>
<div class="a nw" style="left:1070px;top:1212.9px;font-size:26.6px;line-height:26.6px;color:#fff;">DOM Snapshot <span style="color:#b790e4">(pinned)</span></div>
<div class="a" style="left:1399px;top:1194px;width:307px;height:65px;border-radius:9px;background:#f8f8f8"></div>
<div class="a" style="left:1398px;top:1194px;width:2px;height:65px;background:#ddd;"></div>
<div class="a" style="left:1416px;top:1203px;width:214px;height:48px;border-radius:6px;border:2px solid #e2e2e2;background:#f6f6f6"></div>
<div class="a" style="left:1417px;top:1204px;width:116px;height:46px;border-radius:5px 0 0 5px;background:#e6e6e6"></div>
<div class="a" style="left:1533px;top:1204px;width:2px;height:46px;background:#e0e0e0;"></div>
<div class="a nw" style="left:1434px;top:1214.3px;font-size:29px;line-height:29px;color:#4a4a4a;">before</div>
<div class="a nw" style="left:1551px;top:1214.3px;font-size:29px;line-height:29px;color:#4a4a4a;">after</div>
<div class="a" style="left:1646px;top:1194px;width:2px;height:65px;background:#dddddd;"></div>
<svg class="a" style="left:1665px;top:1214px" width="23" height="23" viewBox="0 0 23 23"><path d="M4 4L19 19M19 4L4 19" stroke="#4a4a4a" stroke-width="4.2" stroke-linecap="round"/></svg>
<div class="a" style="left:1859px;top:246px;width:699px;height:1142px;background:#fff;"></div>
<div class="a" style="left:1859px;top:246px;width:699px;height:211px;background:#f1f3f4;"></div>
<div class="a" style="left:1858px;top:246px;width:2px;height:1142px;background:#c4c7cb;"></div>
<div class="a" style="left:1860px;top:298px;width:698px;height:2px;background:#cacdd1;"></div>
<div class="a" style="left:1860px;top:456px;width:698px;height:2px;background:#cacdd1;"></div>
<svg class="a" style="left:1878px;top:259px" width="30" height="30" viewBox="0 0 30 30"><path d="M11 25H4V4H25V11" stroke="#666666" stroke-width="2.6" fill="none"/><path d="M11 11L27 16.5L20.5 19L26 24.5L23.5 27L18 21.5L16 28Z" fill="#666666"/></svg>
<svg class="a" style="left:1930px;top:255px" width="34" height="35" viewBox="0 0 34 35"><rect x="9.5" y="2.5" width="21" height="30" rx="2" stroke="#666666" stroke-width="2.6" fill="none"/><rect x="2.5" y="16.5" width="13" height="16" rx="1.5" stroke="#666666" stroke-width="2.6" fill="#f1f3f4"/></svg>
<div class="a" style="left:1984px;top:256px;width:2px;height:32px;background:#cfd1d4;"></div>
<div class="a nw" style="left:2021px;top:259.6px;font-size:24px;line-height:24px;color:#202124;">Console</div>
<div class="a" style="left:1998px;top:296px;width:136px;height:3px;background:#1a73e8;"></div>
<svg class="a" style="left:2150px;top:262px" width="22" height="20" viewBox="0 0 22 20"><path d="M3 3L10 10L3 17M11 3L18 10L11 17" stroke="#666666" stroke-width="2.6" fill="none"/></svg>
<div class="a" style="left:2293px;top:255px;width:71px;height:35px;border:1.5px solid #cacdd1;border-radius:4px"></div>
<svg class="a" style="left:2305px;top:261px" width="24" height="25" viewBox="0 0 24 25"><path d="M3 1H21C22 1 23 2 23 3V15C23 16 22 17 21 17H8L2 23V3C2 2 2.5 1 3 1Z" fill="#1a73e8"/><rect x="6" y="6" width="12" height="2.3" fill="#fff"/><rect x="6" y="10.5" width="8" height="2.3" fill="#fff"/></svg>
<div class="a nw" style="left:2336px;top:260.1px;font-size:24px;line-height:24px;color:#3c4043;">3</div>
<div class="a" style="left:2376px;top:256px;width:2px;height:32px;background:#cfd1d4;"></div>
<svg class="a" style="left:2396px;top:254px" width="36" height="36" viewBox="0 0 24 24"><path d="M19.14 12.94c.04-.3.06-.61.06-.94 0-.32-.02-.64-.07-.94l2.03-1.58c.18-.14.23-.41.12-.61l-1.92-3.32c-.12-.22-.37-.29-.59-.22l-2.39.96c-.5-.38-1.03-.7-1.62-.94l-.36-2.54c-.04-.24-.24-.41-.48-.41h-3.84c-.24 0-.43.17-.47.41l-.36 2.54c-.59.24-1.13.57-1.62.94l-2.39-.96c-.22-.08-.47 0-.59.22L2.74 8.87c-.12.21-.08.47.12.61l2.03 1.58c-.05.3-.09.63-.09.94s.02.64.07.94l-2.03 1.58c-.18.14-.23.41-.12.61l1.92 3.32c.12.22.37.29.59.22l2.39-.96c.5.38 1.03.7 1.62.94l.36 2.54c.05.24.24.41.48.41h3.84c.24 0 .44-.17.47-.41l.36-2.54c.59-.24 1.13-.56 1.62-.94l2.39.96c.22.08.47 0 .59-.22l1.92-3.32c.12-.22.07-.47-.12-.61l-2.01-1.58zM12 15.6c-1.98 0-3.6-1.62-3.6-3.6s1.62-3.6 3.6-3.6 3.6 1.62 3.6 3.6-1.62 3.6-3.6 3.6z" fill="#666666"/></svg>
<div class="a" style="left:2467.7px;top:259.4px;width:6.6px;height:6.6px;border-radius:50%;background:#666666"></div>
<div class="a" style="left:2467.7px;top:269.7px;width:6.6px;height:6.6px;border-radius:50%;background:#666666"></div>
<div class="a" style="left:2467.7px;top:280.0px;width:6.6px;height:6.6px;border-radius:50%;background:#666666"></div>
<svg class="a" style="left:2518px;top:261px" width="23" height="23" viewBox="0 0 23 23"><path d="M2.5 2.5L20.5 20.5M20.5 2.5L2.5 20.5" stroke="#666666" stroke-width="3"/></svg>
<svg class="a" style="left:1875px;top:313px" width="32" height="28" viewBox="0 0 32 28"><rect x="1.5" y="1.5" width="28" height="25" stroke="#666666" stroke-width="2.6" fill="none"/><path d="M8.5 1.5V26.5" stroke="#666666" stroke-width="2.6"/><path d="M14 7.5L22 14L14 20.5Z" fill="#666666"/></svg>
<svg class="a" style="left:1935px;top:313px" width="28" height="28" viewBox="0 0 28 28"><circle cx="14" cy="14" r="11" stroke="#666666" stroke-width="3.6" fill="none"/><path d="M6.5 6.5L21.5 21.5" stroke="#666666" stroke-width="3.6"/></svg>
<div class="a" style="left:1984px;top:310px;width:2px;height:32px;background:#cfd1d4;"></div>
<div class="a nw" style="left:2004px;top:313.6px;font-size:24px;line-height:24px;color:#5a5e63;">top</div>
<svg class="a" style="left:2052px;top:319px" width="15" height="13" viewBox="0 0 15 13"><path d="M1 1H14L7.5 12Z" fill="#666666"/></svg>
<div class="a" style="left:2084px;top:310px;width:2px;height:32px;background:#cfd1d4;"></div>
<svg class="a" style="left:2105px;top:315px" width="34" height="24" viewBox="0 0 24 17"><path d="M12 1C7 1 2.7 4.1 1 8.5 2.7 12.9 7 16 12 16s9.3-3.1 11-7.5C21.3 4.1 17 1 12 1zm0 12.5c-2.8 0-5-2.2-5-5s2.2-5 5-5 5 2.2 5 5-2.2 5-5 5zm0-8c-1.7 0-3 1.3-3 3s1.3 3 3 3 3-1.3 3-3-1.3-3-3-3z" fill="#666666"/></svg>
<div class="a" style="left:2158px;top:310px;width:2px;height:32px;background:#cfd1d4;"></div>
<div class="a" style="left:2374px;top:310px;width:2px;height:32px;background:#cfd1d4;"></div>
<div class="a nw" style="left:2393px;top:313.6px;font-size:24px;line-height:24px;color:#80868b;">1 hidden</div>
<svg class="a" style="left:2508px;top:309px" width="36" height="36" viewBox="0 0 24 24"><path d="M19.14 12.94c.04-.3.06-.61.06-.94 0-.32-.02-.64-.07-.94l2.03-1.58c.18-.14.23-.41.12-.61l-1.92-3.32c-.12-.22-.37-.29-.59-.22l-2.39.96c-.5-.38-1.03-.7-1.62-.94l-.36-2.54c-.04-.24-.24-.41-.48-.41h-3.84c-.24 0-.43.17-.47.41l-.36 2.54c-.59.24-1.13.57-1.62.94l-2.39-.96c-.22-.08-.47 0-.59.22L2.74 8.87c-.12.21-.08.47.12.61l2.03 1.58c-.05.3-.09.63-.09.94s.02.64.07.94l-2.03 1.58c-.18.14-.23.41-.12.61l1.92 3.32c.12.22.37.29.59.22l2.39-.96c.5.38 1.03.7 1.62.94l.36 2.54c.05.24.24.41.48.41h3.84c.24 0 .44-.17.47-.41l.36-2.54c.59-.24 1.13-.56 1.62-.94l2.39.96c.22.08.47 0 .59-.22l1.92-3.32c.12-.22.07-.47-.12-.61l-2.01-1.58zM12 15.6c-1.98 0-3.6-1.62-3.6-3.6s1.62-3.6 3.6-3.6 3.6 1.62 3.6 3.6-1.62 3.6-3.6 3.6z" fill="#666666"/></svg>
<div class="a" style="left:1869px;top:359px;width:269px;height:41px;background:#fff;border:1.5px solid #d0d2d5"></div>
<div class="a nw" style="left:1878px;top:367.6px;font-size:24px;line-height:24px;color:#5f6368;">Filter</div>
<div class="a" style="left:2142px;top:352px;width:198px;height:51px;background:#f3e7e5;"></div>
<div class="a nw" style="left:2153px;top:366.1px;font-size:24px;line-height:24px;color:#5f6368;">Custom levels</div>
<svg class="a" style="left:2314px;top:370px" width="15" height="13" viewBox="0 0 15 13"><path d="M1 1H14L7.5 12Z" fill="#666666"/></svg>
<div class="a" style="left:2348px;top:362px;width:2px;height:32px;background:#cfd1d4;"></div>
<div class="a" style="left:1865px;top:413px;width:185px;height:35px;border:1.5px solid #cacdd1;border-radius:4px"></div>
<div class="a nw" style="left:1884px;top:417.6px;font-size:24px;line-height:24px;color:#3c4043;">3 Issues:</div>
<svg class="a" style="left:1992px;top:419px" width="24" height="25" viewBox="0 0 24 25"><path d="M3 1H21C22 1 23 2 23 3V15C23 16 22 17 21 17H8L2 23V3C2 2 2.5 1 3 1Z" fill="#1a73e8"/><rect x="6" y="6" width="12" height="2.3" fill="#fff"/><rect x="6" y="10.5" width="8" height="2.3" fill="#fff"/></svg>
<div class="a nw" style="left:2022px;top:418.6px;font-size:24px;line-height:24px;color:#3c4043;">3</div>
<div class="a" style="left:2528px;top:458px;width:30px;height:930px;background:#fbfbfb;"></div>
<div class="a" style="left:2527px;top:458px;width:1px;height:930px;background:#e6e6e6;"></div>
<div class="a" style="left:2535px;top:464px;width:18px;height:591px;background:#c1c1c1;border-radius:9px;"></div>
<div class="a nw" style="left:1908px;top:469.8px;font-size:22px;line-height:22px;color:#5f6368;font-family:'Liberation Mono',monospace;font-style:italic;transform:scaleY(1.1);transform-origin:0 16.7px;">Console was</div>
<div class="a nw" style="left:1908px;top:495.8px;font-size:22px;line-height:22px;color:#5f6368;font-family:'Liberation Mono',monospace;font-style:italic;transform:scaleY(1.1);transform-origin:0 16.7px;">cleared</div>
<div class="a nw" style="left:2153px;top:469.8px;font-size:22px;line-height:22px;color:#545454;font-family:'Liberation Mono',monospace;text-decoration:underline;text-underline-offset:3px;transform:scaleY(1.1);transform-origin:0 16.7px;">cypress_runner.js:178634</div>
<div class="a" style="left:1860px;top:522px;width:667px;height:2px;background:#eeeeee;"></div>
<div class="a" style="left:1860px;top:588px;width:667px;height:2px;background:#eeeeee;"></div>
<div class="a" style="left:1860px;top:652px;width:667px;height:2px;background:#eeeeee;"></div>
<div class="a" style="left:1860px;top:718px;width:667px;height:2px;background:#eeeeee;"></div>
<div class="a" style="left:1860px;top:782px;width:667px;height:2px;background:#eeeeee;"></div>
<div class="a" style="left:1860px;top:1299px;width:667px;height:2px;background:#eeeeee;"></div>
<div class="a nw" style="left:1908px;top:533.8px;font-size:22px;line-height:22px;color:#303942;font-family:'Liberation Mono',monospace;font-weight:bold;transform:scaleY(1.1);transform-origin:0 16.7px;">Command:</div>
<div class="a nw" style="left:2153px;top:533.8px;font-size:22px;line-height:22px;color:#545454;font-family:'Liberation Mono',monospace;text-decoration:underline;text-underline-offset:3px;transform:scaleY(1.1);transform-origin:0 16.7px;">cypress_runner.js:178626</div>
<div class="a nw" style="left:1908px;top:560.8px;font-size:22px;line-height:22px;color:#1f1f1f;font-family:'Liberation Mono',monospace;transform:scaleY(1.1);transform-origin:0 16.7px;">createTransaction</div>
<div class="a nw" style="left:1908px;top:599.8px;font-size:22px;line-height:22px;color:#303942;font-family:'Liberation Mono',monospace;font-weight:bold;transform:scaleY(1.1);transform-origin:0 16.7px;">Transactiontype:</div>
<div class="a nw" style="left:2153px;top:599.8px;font-size:22px;line-height:22px;color:#545454;font-family:'Liberation Mono',monospace;text-decoration:underline;text-underline-offset:3px;transform:scaleY(1.1);transform-origin:0 16.7px;">cypress_runner.js:178626</div>
<div class="a nw" style="left:1908px;top:625.8px;font-size:22px;line-height:22px;color:#1f1f1f;font-family:'Liberation Mono',monospace;transform:scaleY(1.1);transform-origin:0 16.7px;">payment</div>
<div class="a nw" style="left:1908px;top:664.8px;font-size:22px;line-height:22px;color:#303942;font-family:'Liberation Mono',monospace;font-weight:bold;transform:scaleY(1.1);transform-origin:0 16.7px;">Amount:</div>
<div class="a nw" style="left:2153px;top:664.8px;font-size:22px;line-height:22px;color:#545454;font-family:'Liberation Mono',monospace;text-decoration:underline;text-underline-offset:3px;transform:scaleY(1.1);transform-origin:0 16.7px;">cypress_runner.js:178626</div>
<div class="a nw" style="left:1908px;top:689.8px;font-size:22px;line-height:22px;color:#1a1aa6;font-family:'Liberation Mono',monospace;transform:scaleY(1.1);transform-origin:0 16.7px;">30</div>
<div class="a nw" style="left:1908px;top:729.8px;font-size:22px;line-height:22px;color:#303942;font-family:'Liberation Mono',monospace;font-weight:bold;transform:scaleY(1.1);transform-origin:0 16.7px;">Description:</div>
<div class="a nw" style="left:2153px;top:729.8px;font-size:22px;line-height:22px;color:#545454;font-family:'Liberation Mono',monospace;text-decoration:underline;text-underline-offset:3px;transform:scaleY(1.1);transform-origin:0 16.7px;">cypress_runner.js:178626</div>
<div class="a nw" style="left:1906px;top:754.9px;font-size:19px;line-height:19px;color:#000;">🍕</div>
<div class="a nw" style="left:1935px;top:755.8px;font-size:22px;line-height:22px;color:#1f1f1f;font-family:'Liberation Mono',monospace;transform:scaleY(1.1);transform-origin:0 16.7px;">Pizza</div>
<div class="a nw" style="left:1908px;top:793.8px;font-size:22px;line-height:22px;color:#303942;font-family:'Liberation Mono',monospace;font-weight:bold;transform:scaleY(1.1);transform-origin:0 16.7px;">Sender:</div>
<div class="a nw" style="left:2153px;top:793.8px;font-size:22px;line-height:22px;color:#545454;font-family:'Liberation Mono',monospace;text-decoration:underline;text-underline-offset:3px;transform:scaleY(1.1);transform-origin:0 16.7px;">cypress_runner.js:178626</div>
<svg class="a" style="left:1909px;top:823px" width="15" height="13" viewBox="0 0 15 13"><path d="M1 1H14L7.5 12Z" fill="#6e6e6e"/></svg>
<div class="a nw" style="left:1930px;top:821.8px;font-size:22px;line-height:22px;color:#1f1f1f;font-family:'Liberation Mono',monospace;transform:scaleY(1.1);transform-origin:0 16.7px;">Object</div>
<div class="a" style="left:2022px;top:820px;width:22px;height:22px;border-radius:4px;background:#4d8ef3;color:#fff;font-family:'Liberation Mono';font-size:17px;line-height:22px;text-align:center">i</div>
<div class="a nw" style="left:1954px;top:853.6px;font-size:22px;line-height:22px;color:#1f1f1f;font-family:'Liberation Mono',monospace;transform:scaleY(1.1);transform-origin:0 16.7px;"><span style="color:#881391;font-weight:bold">avatar</span>: <span style="color:#c80000">"https://cypress-realworld-app-…</span></div>
<div class="a nw" style="left:1954px;top:885.6px;font-size:22px;line-height:22px;color:#1f1f1f;font-family:'Liberation Mono',monospace;transform:scaleY(1.1);transform-origin:0 16.7px;"><span style="color:#881391;font-weight:bold">balance</span>: <span style="color:#1a1aa6">168137</span></div>
<div class="a nw" style="left:1954px;top:917.6px;font-size:22px;line-height:22px;color:#1f1f1f;font-family:'Liberation Mono',monospace;transform:scaleY(1.1);transform-origin:0 16.7px;"><span style="color:#881391;font-weight:bold">createdAt</span>: <span style="color:#c80000">"2019-08-27T23:47:05.637Z"</span></div>
<div class="a nw" style="left:1954px;top:949.6px;font-size:22px;line-height:22px;color:#1f1f1f;font-family:'Liberation Mono',monospace;transform:scaleY(1.1);transform-origin:0 16.7px;"><span style="color:#881391;font-weight:bold">defaultPrivacyLevel</span>: <span style="color:#c80000">"public"</span></div>
<div class="a nw" style="left:1954px;top:981.6px;font-size:22px;line-height:22px;color:#1f1f1f;font-family:'Liberation Mono',monospace;transform:scaleY(1.1);transform-origin:0 16.7px;"><span style="color:#881391;font-weight:bold">email</span>: <span style="color:#c80000">"Norene39@yahoo.com"</span></div>
<div class="a nw" style="left:1954px;top:1013.6px;font-size:22px;line-height:22px;color:#1f1f1f;font-family:'Liberation Mono',monospace;transform:scaleY(1.1);transform-origin:0 16.7px;"><span style="color:#881391;font-weight:bold">firstName</span>: <span style="color:#c80000">"Edgar"</span></div>
<div class="a nw" style="left:1954px;top:1045.6px;font-size:22px;line-height:22px;color:#1f1f1f;font-family:'Liberation Mono',monospace;transform:scaleY(1.1);transform-origin:0 16.7px;"><span style="color:#881391;font-weight:bold">id</span>: <span style="color:#c80000">"t45AiwidW"</span></div>
<div class="a nw" style="left:1954px;top:1077.6px;font-size:22px;line-height:22px;color:#1f1f1f;font-family:'Liberation Mono',monospace;transform:scaleY(1.1);transform-origin:0 16.7px;"><span style="color:#881391;font-weight:bold">lastName</span>: <span style="color:#c80000">"Johns"</span></div>
<div class="a nw" style="left:1954px;top:1109.6px;font-size:22px;line-height:22px;color:#1f1f1f;font-family:'Liberation Mono',monospace;transform:scaleY(1.1);transform-origin:0 16.7px;"><span style="color:#881391;font-weight:bold">modifiedAt</span>: <span style="color:#c80000">"2020-05-21T11:02:22.857Z"</span></div>
<div class="a nw" style="left:1954px;top:1141.6px;font-size:22px;line-height:22px;color:#1f1f1f;font-family:'Liberation Mono',monospace;transform:scaleY(1.1);transform-origin:0 16.7px;"><span style="color:#881391;font-weight:bold">password</span>: <span style="color:#c80000">"$2a$10$5PXHGtcsckWtAprT5/Jml…</span></div>
<div class="a nw" style="left:1954px;top:1173.6px;font-size:22px;line-height:22px;color:#1f1f1f;font-family:'Liberation Mono',monospace;transform:scaleY(1.1);transform-origin:0 16.7px;"><span style="color:#881391;font-weight:bold">phoneNumber</span>: <span style="color:#c80000">"625-316-9882"</span></div>
<div class="a nw" style="left:1954px;top:1205.6px;font-size:22px;line-height:22px;color:#1f1f1f;font-family:'Liberation Mono',monospace;transform:scaleY(1.1);transform-origin:0 16.7px;"><span style="color:#881391;font-weight:bold">username</span>: <span style="color:#c80000">"Katharina_Bernier"</span></div>
<div class="a nw" style="left:1954px;top:1237.6px;font-size:22px;line-height:22px;color:#1f1f1f;font-family:'Liberation Mono',monospace;transform:scaleY(1.1);transform-origin:0 16.7px;"><span style="color:#881391;font-weight:bold">uuid</span>: <span style="color:#c80000">"6383f84e-b511-44c5-a835-3ece1d78…</span></div>
<svg class="a" style="left:1936px;top:1270px" width="12" height="15" viewBox="0 0 12 15"><path d="M1 1L11 7.5L1 14Z" fill="#6e6e6e"/></svg>
<div class="a nw" style="left:1956px;top:1269.8px;font-size:22px;line-height:22px;color:#1f1f1f;font-family:'Liberation Mono',monospace;transform:scaleY(1.1);transform-origin:0 16.7px;"><span style="color:#5f6368">[[Prototype]]</span>: Object</div>
<div class="a nw" style="left:1908px;top:1311.8px;font-size:22px;line-height:22px;color:#303942;font-family:'Liberation Mono',monospace;font-weight:bold;transform:scaleY(1.1);transform-origin:0 16.7px;">Receiver:</div>
<div class="a nw" style="left:2153px;top:1311.8px;font-size:22px;line-height:22px;color:#545454;font-family:'Liberation Mono',monospace;text-decoration:underline;text-underline-offset:3px;transform:scaleY(1.1);transform-origin:0 16.7px;">cypress_runner.js:178626</div>
<svg class="a" style="left:1909px;top:1344px" width="15" height="13" viewBox="0 0 15 13"><path d="M1 1H14L7.5 12Z" fill="#6e6e6e"/></svg>
<div class="a nw" style="left:1930px;top:1342.8px;font-size:22px;line-height:22px;color:#1f1f1f;font-family:'Liberation Mono',monospace;transform:scaleY(1.1);transform-origin:0 16.7px;">Object</div>
<div class="a" style="left:2022px;top:1341px;width:22px;height:22px;border-radius:4px;background:#4d8ef3;color:#fff;font-family:'Liberation Mono';font-size:17px;line-height:22px;text-align:center">i</div>
<div class="a nw" style="left:1954px;top:1373.8px;font-size:22px;line-height:22px;color:#1f1f1f;font-family:'Liberation Mono',monospace;transform:scaleY(1.1);transform-origin:0 16.7px;"><span style="color:#881391;font-weight:bold">avatar</span>: <span style="color:#c80000">"https://cypress-realworld-app-…</span></div>
<div class="a" style="left:-2px;top:1372px;width:20px;height:20px;background:radial-gradient(circle at 100% 0,rgba(0,0,0,0) 15px,#262626 16px)"></div>
<div class="a" style="left:2540px;top:1372px;width:20px;height:20px;background:radial-gradient(circle at 0 0,rgba(0,0,0,0) 15px,#262626 16px)"></div>
<div class="a" style="left:0;top:0;width:14px;height:14px;background:radial-gradient(circle at 100% 100%,rgba(0,0,0,0) 13px,#9a9a9a 13.5px,#444 15px)"></div>
<div class="a" style="left:2544px;top:0;width:14px;height:14px;background:radial-gradient(circle at 0 100%,rgba(0,0,0,0) 13px,#9a9a9a 13.5px,#444 15px)"></div>
<div class="a" style="left:0px;top:246px;width:2558px;height:1px;background:#a8a8a8;"></div>
<div class="a" style="left:0px;top:247px;width:2558px;height:10px;background:linear-gradient(rgba(0,0,0,.17),rgba(0,0,0,0));"></div>
</body></html>
